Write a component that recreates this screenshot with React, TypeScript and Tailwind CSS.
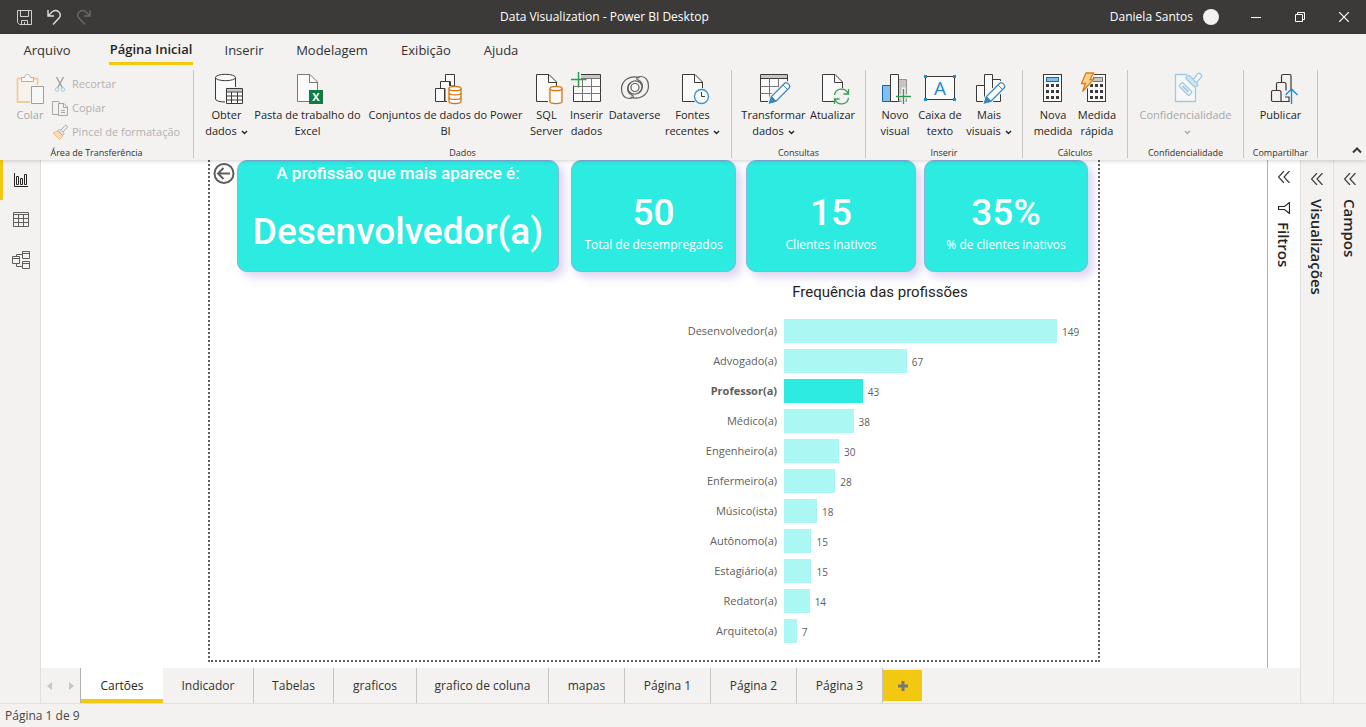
import type { ReactNode } from "react";

/* ---------- Shared drawing parts ---------- */

const INK = "#3b3a39";

function Icon({ children, size = 32 }: { children: ReactNode; size?: number }) {
  return (
    <svg width={size} height={size} viewBox={`0 0 ${size} ${size}`} fill="none" stroke={INK} className="shrink-0 overflow-visible" aria-hidden="true">
      {children}
    </svg>
  );
}

function Page({ stroke = INK }: { stroke?: string }) {
  return (
    <g stroke={stroke}>
      <path d="M5.5 2.5H18L25.500 10V29.500H5.500Z" fill="#fafafa" />
      <path d="M17.500 2.500V10.500H25.500" />
    </g>
  );
}

function Cylinder({ rings = false }: { rings?: boolean }) {
  return (
    <g stroke="#d9730d" strokeWidth="1.3">
      <path d="M17 14h16v18H17z" fill="#f3f2f1" stroke="none" />
      <path d="M19 16.500V29.500C19 32.300 31 32.300 31 29.500V16.500" fill="#fafafa" />
      <ellipse cx="25" cy="16.500" rx="6" ry="2.200" fill="#fafafa" />
      {rings && <path d="M19 21C19 23.500 31 23.500 31 21M19 25.500C19 28 31 28 31 25.500" />}
    </g>
  );
}

function Pencil() {
  return (
    <g>
      <path d="M10.500 32L13 24L27 10.500C29 9 34 13 32.500 15.500L18.500 29.500Z" fill="#f3f2f1" stroke="#f3f2f1" strokeWidth="2.500" />
      <path d="M11.500 31L13.500 24.500L27 11C28.500 9.500 33 13.500 31.500 15.500L18 29.200Z" fill="#fafafa" stroke="#3a87bd" strokeWidth="1.200" />
      <path d="M11.500 31L13.500 24.500L18 29.200Z" fill="#3a87bd" stroke="#3a87bd" />
      <path d="M25 13L29.500 17.500" stroke="#3a87bd" />
    </g>
  );
}

function Keys() {
  return (
    <g fill={INK} stroke="none">
      {[12, 18, 24].map((y) => [9, 14, 19].map((x) => <rect key={`${x}-${y}`} x={x} y={y} width="3" height="3" />))}
    </g>
  );
}

function Caret() {
  return (
    <svg width="7" height="5" viewBox="0 0 7 5" fill="none" stroke="currentColor" strokeWidth="1.400" className="ml-1 inline-block align-middle" aria-hidden="true">
      <path d="M1 1L3.500 3.500L6 1" />
    </svg>
  );
}

/* ---------- Ribbon icons ---------- */

const GetDataIcon = () => (
  <Icon>
    <path d="M4.500 5.500V27C4.500 31 24.500 31 24.500 27V5.500" fill="#fafafa" />
    <ellipse cx="14.500" cy="5.500" rx="10" ry="3.200" fill="#fafafa" />
    <path d="M14 15H32V32H14Z" fill="#f3f2f1" stroke="none" />
    <path d="M15.500 16.500H31.500V31.500H15.500Z" fill="#fafafa" />
    <path d="M16 17H31V19.500H16Z" fill="#c8c6c4" stroke="none" />
    <path d="M15.500 20H31.500M15.500 24H31.500M15.500 28H31.500M20.500 20V31M26.500 20V31" />
  </Icon>
);

const ExcelIcon = () => (
  <Icon>
    <Page stroke="#797775" />
    <rect x="17" y="18" width="14" height="14" fill="#107c41" stroke="none" />
    <text x="24" y="29" textAnchor="middle" fill="#fff" stroke="none" className="font-['Open_Sans',sans-serif] text-[11px] font-bold">
      X
    </text>
  </Icon>
);

const DatasetIcon = () => (
  <Icon>
    <path d="M15.500 9V2.500H24.500V14H20.500V9.500H15.500" fill="#fafafa" />
    <path d="M10.500 16V9.500H19.500V29.500H15V16.500H10.500" fill="#fafafa" />
    <path d="M5.500 16.500H14.500V29.500H5.500Z" fill="#fafafa" />
    <Cylinder rings />
  </Icon>
);

const SqlIcon = () => (
  <Icon>
    <Page />
    <Cylinder />
  </Icon>
);

const InsertDataIcon = () => (
  <Icon>
    <path d="M2.500 2.500H29.500V29.500H2.500Z" fill="#fafafa" />
    <path d="M3 3H29V6H3Z" fill="#c8c6c4" stroke="none" />
    <path d="M2.500 6.500H29.500" stroke="#797775" />
    <path d="M2.500 14.500H29.500M2.500 21.500H29.500M11.500 6.500V29M20.500 6.500V29" stroke="#797775" />
    <path d="M-1 0H10V13.500H-1Z" fill="#f3f2f1" stroke="none" />
    <path d="M7.500 0V15.500M0 7.500H15.500" stroke="#2d9b4b" strokeWidth="1.500" />
  </Icon>
);

const DataverseIcon = () => (
  <Icon>
    <g stroke="#605e5c" strokeWidth="1.200">
      <path d="M20.500 6C12 2.500 2.500 8 2.500 17C2.500 22.500 5.500 26.500 10 26.500C13.500 26.500 15.500 24.500 13.500 23.500C8.500 21.500 7.500 17 9.500 13C12 8.500 18 7.500 21.500 11C24 14 23.500 18 20 20.500" fill="none" />
      <path d="M11.500 25C20 28.500 29.500 23 29.500 14C29.500 8.500 26.500 4.500 22 4.500C18.500 4.500 16.500 6.500 18.500 7.500C23.500 9.500 24.500 14 22.500 18C20 22.500 14 23.500 10.500 20C8 17 8.500 13 12 10.500" />
      <circle cx="16" cy="15.500" r="4" fill="#fafafa" />
    </g>
  </Icon>
);

const RecentIcon = () => (
  <Icon>
    <Page />
    <circle cx="24.500" cy="24.500" r="8.500" fill="#f3f2f1" stroke="none" />
    <circle cx="24.500" cy="24.500" r="7" fill="#fafafa" stroke="#3a96d0" strokeWidth="1.400" />
    <path d="M24.500 20V24.500H28" />
  </Icon>
);

const TransformIcon = () => (
  <Icon>
    <path d="M2.500 2.500H29.500V29.500H2.500Z" fill="#fafafa" />
    <path d="M3 3H29V6H3Z" fill="#c8c6c4" stroke="none" />
    <path d="M2.500 6.500H29.500" />
    <path d="M2.500 14.500H29M2.500 21.500H29M11.500 6.500V29M20.500 6.500V29" stroke="#797775" />
    <path d="M16 30L30 16V30Z" fill="#f3f2f1" stroke="#f3f2f1" />
    <Pencil />
  </Icon>
);

const RefreshIcon = () => (
  <Icon>
    <Page />
    <circle cx="24.500" cy="24.500" r="8.500" fill="#f3f2f1" stroke="none" />
    <g stroke="#3f9c52" strokeWidth="1.300">
      <path d="M17.500 23C18.500 16 28.500 15 31 21.500M31.500 17V22H26.500" />
      <path d="M31.500 26C30.500 33 20.500 34 18 27.500M17.500 32V27H22.500" />
    </g>
  </Icon>
);

const NewVisualIcon = () => (
  <Icon>
    <path d="M19.500 7.500H27.500V29.500H19.500Z" fill="#c8c6c4" stroke="#979593" />
    <path d="M3.500 13.500H11.500V29.500H3.500Z" fill="#83beec" stroke="#1068ad" />
    <path d="M11.500 2.500H19.500V29.500H11.500Z" fill="#fafafa" />
    <path d="M22.500 15.500H26.500V22.500H33V26.500H26.500V33H22.500V26.500H20V22.500H22.500Z" fill="#f3f2f1" stroke="none" />
    <path d="M24.500 17V32M17 24.500H32" stroke="#2d9b4b" strokeWidth="1.300" />
  </Icon>
);

const TextBoxIcon = () => (
  <Icon>
    <rect x="1.500" y="4.500" width="29" height="23" fill="#fafafa" />
    <g fill="#1e8bcd" stroke="none">
      <rect x="0" y="3" width="3" height="3" />
      <rect x="29" y="3" width="3" height="3" />
      <rect x="0" y="26" width="3" height="3" />
      <rect x="29" y="26" width="3" height="3" />
    </g>
    <text x="16" y="23" textAnchor="middle" fill="#1e8bcd" stroke="none" className="font-['Open_Sans',sans-serif] text-[19px]">
      A
    </text>
  </Icon>
);

const MoreVisualsIcon = () => (
  <Icon>
    <path d="M3.500 13.500H11.500V29.500H3.500ZM11.500 2.500H19.500V29.500H11.500ZM19.500 7.500H27.500V29.500H19.500Z" fill="#fafafa" />
    <Pencil />
  </Icon>
);

const MeasureIcon = () => (
  <Icon>
    <rect x="6.500" y="2.500" width="18" height="27" fill="#fafafa" />
    <rect x="9.500" y="5.500" width="12" height="4" fill="#83beec" stroke="#1068ad" />
    <Keys />
  </Icon>
);

const QuickMeasureIcon = () => (
  <Icon>
    <rect x="6.500" y="2.500" width="18" height="27" fill="#fafafa" />
    <rect x="12.500" y="5.500" width="9" height="4" fill="#c8c6c4" stroke="#797775" />
    <Keys />
    <path d="M4 0H14L11 7H14L2 22L-1 20V10Z" fill="#f3f2f1" stroke="none" />
    <path d="M5 1H12.500L9 7.500H12.500L1.500 19.500L4.500 11.500H0.500Z" fill="#fdd28b" stroke="#e07b12" strokeWidth="1.300" />
  </Icon>
);

const SensitivityIcon = () => (
  <Icon>
    <g stroke="#9fcbe4" strokeWidth="1.300">
      <path d="M17 2.500H5.500V29.500H25.500V16" fill="#f7f7f7" />
      <rect x="-7" y="-2.500" width="14" height="5" rx="1" transform="translate(15.500 17) rotate(45)" />
      <path d="M12.500 14L18.500 20" strokeWidth="1.800" />
      <path d="M23.500 7L27.500 2C29.500 0 33 3.500 31 5.500L26.500 10.500" fill="#f7f7f7" />
      <rect x="-7" y="-2" width="14" height="4.500" rx="2" transform="translate(22 9) rotate(45)" fill="#cfe4f0" />
    </g>
  </Icon>
);

const PublishIcon = () => (
  <Icon>
    <path d="M16.500 10V4C16.500 3 17 2.500 18 2.500H24.500C25.500 2.500 26 3 26 4V17M11.500 18V12C11.500 11 12 10.500 13 10.500H19.500C20.500 10.500 21 11 21 12V18.500" strokeWidth="1.200" />
    <path d="M6.500 20C6.500 19 7 18.500 8 18.500H14.500C15.500 18.500 16 19 16 20V29.500H8C7 29.500 6.500 29 6.500 28ZM16 29.500H24V25H20" strokeWidth="1.200" />
    <path d="M26.500 32V17M20.500 23L26.500 17L32.500 23" stroke="#1e8bcd" strokeWidth="1.400" />
  </Icon>
);

const PasteIcon = () => (
  <Icon>
    <path d="M3.500 6.500H23.500V30H3.500Z" fill="#f8f3ea" stroke="#f0cd9c" strokeWidth="1.800" />
    <path d="M7.500 9.500V5.500H10.500C11 1.500 16 1.500 16.500 5.500H19.500V9.500Z" fill="#f7f7f7" stroke="#b3b0ad" />
    <path d="M16 13H31V32H16Z" fill="#f3f2f1" stroke="none" />
    <path d="M17.500 14.500H29.500V31.500H17.500Z" fill="#f7f7f7" stroke="#a19f9d" />
  </Icon>
);

const CutIcon = () => (
  <Icon size={16}>
    <path d="M4.500 1L10.500 12M11.500 1L5.500 12" stroke="#a19f9d" strokeWidth="1.400" />
    <circle cx="5" cy="13.500" r="1.800" stroke="#9fcbe4" />
    <circle cx="11" cy="13.500" r="1.800" stroke="#9fcbe4" />
  </Icon>
);

const CopyIcon = () => (
  <Icon size={16}>
    <g stroke="#a8a6a4">
      <path d="M6 14.500H.500V1.500H6.500L8 3" />
      <path d="M6.500 3.500H12L15.500 7V15.500H6.500ZM11.500 3.500V7.500H15.500M9 10.500H13M9 12.500H13" />
    </g>
  </Icon>
);

const BrushIcon = () => (
  <Icon size={16}>
    <path d="M1 9L6 7L11 12L7.500 15.500Z" fill="#f8dcb8" stroke="#f0bd8c" />
    <path d="M6 6.500L7.500 5L12 9.500L10.500 11.500Z" stroke="#a8a6a4" />
    <path d="M9 6L13 1.500C14 .500 16 2 15 3.500L11 8" stroke="#a8a6a4" />
  </Icon>
);

/* ---------- Ribbon ---------- */

type Command = {
  id: string;
  lines: string[];
  width: string;
  icon: ReactNode;
  menu?: boolean;
  disabled?: boolean;
};

function CommandButton({ lines, width, icon, menu, disabled }: Command) {
  return (
    <button
      type="button"
      disabled={disabled}
      className={`flex flex-col items-center gap-[3px] text-[11px] leading-4 whitespace-nowrap ${width} ${disabled ? "text-[#a8a6a4]" : "text-[#252423]"}`}
    >
      {icon}
      <span className="flex flex-col items-center">
        {lines.map((line, i) => (
          <span key={line} className="block">
            {line}
            {menu && i === lines.length - 1 && <Caret />}
          </span>
        ))}
      </span>
    </button>
  );
}

function Group({ title, width, children }: { title: string; width: string; children: ReactNode }) {
  return (
    <section aria-label={title} className={`my-0.5 flex shrink-0 flex-col justify-between border-r border-[#c8c6c4] ${width}`}>
      <div className="flex justify-center pt-0.5">{children}</div>
      <h2 className="text-center text-[9px] leading-[10px] whitespace-nowrap text-[#323130]">{title}</h2>
    </section>
  );
}

const groups: { title: string; width: string; commands: Command[] }[] = [
  {
    title: "Dados",
    width: "w-[538px]",
    commands: [
      { id: "get", lines: ["Obter", "dados"], width: "w-[50px]", icon: <GetDataIcon />, menu: true },
      { id: "excel", lines: ["Pasta de trabalho do", "Excel"], width: "w-28", icon: <ExcelIcon /> },
      { id: "sets", lines: ["Conjuntos de dados do Power", "BI"], width: "w-[164px]", icon: <DatasetIcon /> },
      { id: "sql", lines: ["SQL", "Server"], width: "w-[38px]", icon: <SqlIcon /> },
      { id: "insert", lines: ["Inserir", "dados"], width: "w-[42px]", icon: <InsertDataIcon /> },
      { id: "verse", lines: ["Dataverse"], width: "w-[54px]", icon: <DataverseIcon /> },
      { id: "recent", lines: ["Fontes", "recentes"], width: "w-[62px]", icon: <RecentIcon />, menu: true },
    ],
  },
  {
    title: "Consultas",
    width: "w-[134px]",
    commands: [
      { id: "transform", lines: ["Transformar", "dados"], width: "w-[68px]", icon: <TransformIcon />, menu: true },
      { id: "refresh", lines: ["Atualizar"], width: "w-[50px]", icon: <RefreshIcon /> },
    ],
  },
  {
    title: "Inserir",
    width: "w-[157px]",
    commands: [
      { id: "visual", lines: ["Novo", "visual"], width: "w-[44px]", icon: <NewVisualIcon /> },
      { id: "text", lines: ["Caixa de", "texto"], width: "w-[46px]", icon: <TextBoxIcon /> },
      { id: "more", lines: ["Mais", "visuais"], width: "w-[52px]", icon: <MoreVisualsIcon />, menu: true },
    ],
  },
  {
    title: "Cálculos",
    width: "w-[105px]",
    commands: [
      { id: "measure", lines: ["Nova", "medida"], width: "w-[44px]", icon: <MeasureIcon /> },
      { id: "quick", lines: ["Medida", "rápida"], width: "w-[44px]", icon: <QuickMeasureIcon /> },
    ],
  },
  {
    title: "Confidencialidade",
    width: "w-[116px]",
    commands: [{ id: "label", lines: ["Confidencialidade", ""], width: "w-24", icon: <SensitivityIcon />, menu: true, disabled: true }],
  },
  {
    title: "Compartilhar",
    width: "w-[74px]",
    commands: [{ id: "publish", lines: ["Publicar"], width: "w-[50px]", icon: <PublishIcon /> }],
  },
];

const clipboard = [
  { label: "Recortar", icon: <CutIcon /> },
  { label: "Copiar", icon: <CopyIcon /> },
  { label: "Pincel de formatação", icon: <BrushIcon /> },
];

function Ribbon() {
  return (
    <div className="flex h-[92px]">
      <Group title="Área de Transferência" width="w-[194px]">
        <div className="flex w-full gap-1 pl-3">
          <CommandButton id="paste" lines={["Colar"]} width="w-9" icon={<PasteIcon />} disabled />
          <div className="flex flex-col">
            {clipboard.map((c) => (
              <button key={c.label} type="button" disabled className="flex h-6 items-center gap-1 text-[11px] whitespace-nowrap text-[#b3b0ad]">
                {c.icon}
                {c.label}
              </button>
            ))}
          </div>
        </div>
      </Group>
      {groups.map((g) => (
        <Group key={g.title} title={g.title} width={g.width}>
          {g.commands.map((c) => (
            <CommandButton key={c.id} {...c} />
          ))}
        </Group>
      ))}
      <button type="button" aria-label="Recolher faixa" className="mt-auto mr-1 mb-1.5 ml-auto">
        <svg width="10" height="7" viewBox="0 0 10 7" fill="none" stroke={INK} strokeWidth="2">
          <path d="M1 5.500L5 1.500L9 5.500" />
        </svg>
      </button>
    </div>
  );
}

/* ---------- Title bar and menu ---------- */

function TitleBar() {
  return (
    <header className="flex h-[34px] items-center bg-[#3b3a39] text-[12px] whitespace-nowrap text-white">
      <div className="flex w-[500px] gap-3.5 pl-4">
        <button type="button" aria-label="Salvar">
          <svg width="16" height="16" viewBox="0 0 16 16" fill="none" stroke="#d2d0ce">
            <path d="M1.500 1.500H15.500V15.500H3.500L1.500 13.500ZM4.500 1.500V7.500H12.500V1.500M5.500 15.500V11.500H11.500V15.500M8.500 15V13" />
          </svg>
        </button>
        <button type="button" aria-label="Desfazer">
          <svg width="16" height="16" viewBox="0 0 16 16" fill="none" stroke="#e1dfdd" strokeWidth="1.400">
            <path d="M2 1V7H8M2 7L6.500 2.500C11 -.500 16 4 13.500 8.500L7 15.500" />
          </svg>
        </button>
        <button type="button" aria-label="Refazer" disabled>
          <svg width="16" height="16" viewBox="0 0 16 16" fill="none" stroke="#6b6967" strokeWidth="1.400">
            <path d="M14 1V7H8M14 7L9.500 2.500C5 -.500 0 4 2.500 8.500L9 15.500" />
          </svg>
        </button>
      </div>
      <h1>Data Visualization - Power BI Desktop</h1>
      <div className="ml-auto flex items-center gap-2.5 pr-[15px]">
        <span>Daniela Santos</span>
        <span className="size-4 rounded-full bg-[#f3f2f1]" />
      </div>
      <button type="button" aria-label="Minimizar" className="flex w-11 justify-center">
        <svg width="10" height="10" viewBox="0 0 10 10" stroke="#fff">
          <path d="M0 5.500H10" />
        </svg>
      </button>
      <button type="button" aria-label="Restaurar" className="flex w-11 justify-center">
        <svg width="10" height="10" viewBox="0 0 10 10" fill="none" stroke="#fff">
          <path d="M.500 2.500H7.500V9.500H.500ZM2.500 2.500V.500H9.500V7.500H7.500" />
        </svg>
      </button>
      <button type="button" aria-label="Fechar" className="flex w-11 justify-center">
        <svg width="10" height="10" viewBox="0 0 10 10" stroke="#fff" strokeWidth="1.200">
          <path d="M0 0L10 10M10 0L0 10" />
        </svg>
      </button>
    </header>
  );
}

const menus = [
  { label: "Inserir", width: "w-[38px]" },
  { label: "Modelagem", width: "w-[74px]" },
  { label: "Exibição", width: "w-[50px]" },
  { label: "Ajuda", width: "w-9" },
];

function MenuTabs() {
  return (
    <nav className="flex h-[34px] items-start gap-8 pl-[23px] text-[13px] leading-7 whitespace-nowrap text-[#323130]">
      <button type="button" className="mr-1.5 flex w-12 justify-center pt-0.5">
        Arquivo
      </button>
      <button type="button" aria-current="page" className="flex w-[84px] justify-center border-b-3 border-[#f2c811] pt-0.5 leading-[26px] font-semibold text-[#252423]">
        Página Inicial
      </button>
      {menus.map((m) => (
        <button key={m.label} type="button" className={`flex justify-center pt-0.5 ${m.width}`}>
          {m.label}
        </button>
      ))}
    </nav>
  );
}

/* ---------- Side areas ---------- */

function ViewRail() {
  return (
    <nav className="flex w-[41px] shrink-0 flex-col border-r border-[#e1dfdd]">
      <button type="button" aria-label="Relatório" aria-current="page" className="flex h-10 items-center justify-center border-l-3 border-[#f2c811] pr-0.5">
        <svg width="16" height="16" viewBox="0 0 16 16" fill="none" stroke="#252423">
          <path d="M1.500 1V14.500H15M3.500 4.500H5.500V12.500H3.500ZM7.500 6.500H9.500V12.500H7.500ZM11.500 2.500H13.500V12.500H11.500Z" />
        </svg>
      </button>
      <button type="button" aria-label="Dados" className="flex h-10 items-center justify-center pl-0.5">
        <svg width="16" height="16" viewBox="0 0 16 16" fill="none" stroke="#605e5c">
          <path d="M.500 .500H15.500V14.500H.500ZM.500 2.500H15.500M.500 6.500H15.500M.500 10.500H15.500M5.500 2.500V14.500M10.500 2.500V14.500" />
        </svg>
      </button>
      <button type="button" aria-label="Modelo" className="flex h-10 items-center justify-center pl-0.5">
        <svg width="18" height="18" viewBox="0 0 18 18" fill="none" stroke="#605e5c">
          <path d="M.500 5.500H7.500V12.500H.500ZM.500 7.500H7.500M10.500 .500H17.500V7.500H10.500ZM10.500 2.500H17.500M10.500 10.500H17.500V17.500H10.500ZM10.500 12.500H17.500M4.500 5.500V3.500H10.500M4.500 12.500V15.500H10.500" />
        </svg>
      </button>
    </nav>
  );
}

function Chevrons() {
  return (
    <svg width="12" height="12" viewBox="0 0 12 12" fill="none" stroke={INK} strokeWidth="1.200" className="shrink-0" aria-hidden="true">
      <path d="M6 0L.500 6L6 12M11.500 0L6 6L11.500 12" />
    </svg>
  );
}

function SidePane({ label, className, children }: { label: string; className: string; children?: ReactNode }) {
  return (
    <aside className={`w-[33px] shrink-0 border-l ${className}`}>
      <button type="button" className="flex w-full flex-col items-center text-[#252423]">
        <Chevrons />
        {children}
        <span className="text-[15px] leading-5 font-semibold [writing-mode:vertical-rl]">{label}</span>
      </button>
    </aside>
  );
}

/* ---------- Report ---------- */

const CARD = "flex shrink-0 flex-col items-center rounded-[10px] border border-[#86b5e2] bg-[#2cebe1] text-white shadow-[5px_5px_10px_rgba(125,95,200,0.28)]";

function Card({ value, label, className }: { value: string; label: string; className: string }) {
  return (
    <article className={`${CARD} pt-7 ${className}`}>
      <strong className="font-['Roboto',sans-serif] text-[37px] leading-[48px] font-medium">{value}</strong>
      <span className="text-[12px] leading-4 whitespace-nowrap">{label}</span>
    </article>
  );
}

const professions = [
  { name: "Desenvolvedor(a)", count: 149 },
  { name: "Advogado(a)", count: 67 },
  { name: "Professor(a)", count: 43, selected: true },
  { name: "Médico(a)", count: 38 },
  { name: "Engenheiro(a)", count: 30 },
  { name: "Enfermeiro(a)", count: 28 },
  { name: "Músico(ista)", count: 18 },
  { name: "Autônomo(a)", count: 15 },
  { name: "Estagiário(a)", count: 15 },
  { name: "Redator(a)", count: 14 },
  { name: "Arquiteto(a)", count: 7 },
];

function Chart() {
  return (
    <figure className="mt-2 mr-[11px] ml-auto w-[414px]">
      <figcaption className="mb-3 text-center font-['Roboto',sans-serif] text-[15px] leading-6 text-[#252423]">Frequência das profissões</figcaption>
      <ul>
        {professions.map((p) => (
          <li key={p.name} className="flex h-[30px] items-center text-[#605e5c]">
            <span className={`w-[104px] shrink-0 text-right text-[11px] leading-4 ${p.selected ? "font-bold" : ""}`}>{p.name}</span>
            <span className="ml-[7px] flex w-[273px] shrink-0 items-center">
              <span className={`h-6 shrink-0 ${p.selected ? "bg-[#2cebe1]" : "bg-[#aaf7f3]"}`} style={{ width: `${(p.count / 149) * 100}%` }} />
              <span className="pt-0.5 pl-[5px] text-[10px] leading-4">{p.count}</span>
            </span>
          </li>
        ))}
      </ul>
    </figure>
  );
}

function Report() {
  return (
    <main className="flex flex-1 justify-center bg-white pb-1.5">
      <div className="w-[892px] border-x-2 border-b-2 border-dotted border-[#605e5c]">
        <div className="flex">
          <button type="button" aria-label="Voltar" className="mt-0.5 mr-0.5 ml-[3px] size-[22px] shrink-0 self-start">
            <svg width="22" height="22" viewBox="0 0 22 22" fill="none" stroke="#605e5c" strokeWidth="2">
              <circle cx="11" cy="11.500" r="9.500" />
              <path d="M17 11.500H5.500M10.500 6L5 11.500L10.500 17" />
            </svg>
          </button>
          <article className={`${CARD} h-28 w-[322px] font-['Roboto',sans-serif] font-medium whitespace-nowrap`}>
            <h2 className="text-[17px] leading-6">A profissão que mais aparece é:</h2>
            <strong className="mt-6 text-[37px] leading-[46px] font-medium">Desenvolvedor(a)</strong>
          </article>
          <Card value="50" label="Total de desempregados" className="ml-3 h-28 w-[165px]" />
          <Card value="15" label="Clientes inativos" className="ml-2.5 h-28 w-[170px]" />
          <Card value="35%" label="% de clientes inativos" className="ml-2 h-28 w-[164px]" />
        </div>
        <Chart />
      </div>
    </main>
  );
}

const pages = [
  { label: "Indicador", width: "w-[91px]" },
  { label: "Tabelas", width: "w-20" },
  { label: "graficos", width: "w-[83px]" },
  { label: "grafico de coluna", width: "w-[132px]" },
  { label: "mapas", width: "w-[76px]" },
  { label: "Página 1", width: "w-[86px]" },
  { label: "Página 2", width: "w-[86px]" },
  { label: "Página 3", width: "w-[86px]" },
];

function PageTabs() {
  return (
    <nav className="flex h-[35px] text-[12px] whitespace-nowrap text-[#323130]">
      <div className="flex w-10 items-center justify-between border-r border-[#b3b0ad] pr-1.5 pl-1.5">
        <button type="button" aria-label="Página anterior" disabled>
          <svg width="5" height="8" viewBox="0 0 5 8" fill="#c8c6c4">
            <path d="M5 0V8L0 4Z" />
          </svg>
        </button>
        <button type="button" aria-label="Próxima página" disabled>
          <svg width="5" height="8" viewBox="0 0 5 8" fill="#c8c6c4">
            <path d="M0 0V8L5 4Z" />
          </svg>
        </button>
      </div>
      <button type="button" aria-current="page" className="w-[82px] border-b-4 border-[#f2c811] bg-white pt-1 font-medium text-[#252423]">
        Cartões
      </button>
      {pages.map((p) => (
        <button key={p.label} type="button" className={`border-r border-[#c8c6c4] ${p.width}`}>
          {p.label}
        </button>
      ))}
      <button type="button" aria-label="Nova página" className="my-0.5 flex w-[39px] items-center justify-center bg-[#f2c811]">
        <svg width="10" height="10" viewBox="0 0 10 10" stroke="#797775" strokeWidth="3">
          <path d="M5 0V10M0 5H10" />
        </svg>
      </button>
    </nav>
  );
}

export default function App() {
  return (
    <div className="flex min-h-screen flex-col overflow-x-hidden bg-[#f3f2f1] font-['Open_Sans','Noto_Sans',sans-serif]">
      <TitleBar />
      <div className="relative z-10 bg-[#f3f2f1] shadow-[0_1px_4px_rgba(0,0,0,0.18)]">
        <MenuTabs />
        <Ribbon />
      </div>
      <div className="flex flex-1">
        <ViewRail />
        <div className="flex min-w-0 flex-1 flex-col">
          <div className="flex flex-1">
            <Report />
            <SidePane label="Filtros" className="border-[#b3b0ad] bg-white pt-[11px]">
              <svg width="12" height="12" viewBox="0 0 12 12" fill="none" stroke="#252423" strokeWidth="1.200" className="mt-[19px] mb-2" aria-hidden="true">
                <path d="M11.500 .500V11.500L6.500 7.500H.500V4.500H6.500Z" />
              </svg>
            </SidePane>
          </div>
          <PageTabs />
        </div>
        <SidePane label="Visualizações" className="border-[#e1dfdd] pt-[13px] [&_span]:mt-3.5" />
        <SidePane label="Campos" className="border-[#e1dfdd] pt-[13px] [&_span]:mt-3.5" />
      </div>
      <footer className="h-6 border-t border-[#e1dfdd] pl-[5px] text-[12px] leading-6 text-[#484644]">Página 1 de 9</footer>
    </div>
  );
}
